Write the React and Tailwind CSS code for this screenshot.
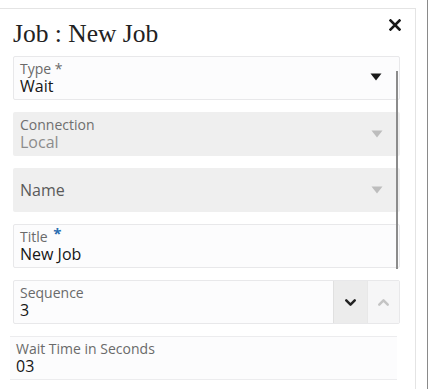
import { FiChevronDown, FiChevronUp } from 'react-icons/fi';

const sans = { fontFamily: '"Open Sans", "Noto Sans", sans-serif' };

function Caret({ light }) {
  return (
    <svg width="12" height="8" viewBox="0 0 12 8" className="shrink-0">
      <path d="M0.5 0.5 L11.5 0.5 L6 7.5 Z" fill={light ? '#bdbdbd' : '#1a1a1a'} />
    </svg>
  );
}

export default function App() {
  return (
    <div className="relative w-[428px] h-[389px] bg-white overflow-hidden border-r border-[#8a8a8a]">
      <div className="mt-[8px] w-[416px] h-[381px] border-t border-r border-[#e4e4e4] relative" style={sans}>
        {/* Header */}
        <div className="flex items-center justify-between h-[47px] pl-[13px] pr-[14px] pt-[3px]">
          <h1 className="text-[25.5px] leading-none text-[#222]" style={{ fontFamily: '"Liberation Serif", serif' }}>
            Job : New Job
          </h1>
          <svg width="12" height="12" viewBox="0 0 12 12" className="-mt-[18px]">
            <path d="M1.5 1.5 L10.5 10.5 M10.5 1.5 L1.5 10.5" stroke="#1a1a1a" strokeWidth="2.6" strokeLinecap="square" />
          </svg>
        </div>

        <div className="flex flex-col gap-[12px] pl-[13px] w-[400px]">
          {/* Type */}
          <div className="h-[44px] bg-[#fcfcfd] border border-[#e8e8ea] rounded-[2px] flex items-center pl-[6px] pr-[17px]">
            <div className="flex-1 flex flex-col">
              <span className="text-[14px] leading-[16px] text-[#6a6a6a]">Type *</span>
              <span className="text-[16px] leading-[19px] text-[#161616]">Wait</span>
            </div>
            <div className="mb-[2px]"><Caret /></div>
          </div>

          {/* Connection */}
          <div className="h-[44px] bg-[#efefef] rounded-[2px] flex items-center pl-[7px] pr-[17px]">
            <div className="flex-1 flex flex-col">
              <span className="text-[14px] leading-[16px] text-[#6e6e6e]">Connection</span>
              <span className="text-[16px] leading-[19px] text-[#8c8c8c]">Local</span>
            </div>
            <Caret light />
          </div>

          {/* Name */}
          <div className="h-[44px] bg-[#efefef] rounded-[2px] flex items-center pl-[7px] pr-[17px]">
            <span className="flex-1 text-[16px] text-[#5a5a5a]">Name</span>
            <Caret light />
          </div>

          {/* Title */}
          <div className="h-[44px] bg-[#fcfcfd] border border-[#e8e8ea] rounded-[2px] flex flex-col justify-center pl-[6px]">
            <span className="text-[14px] leading-[16px] text-[#6a6a6a]">
              Title <span className="text-[#2a6db0] text-[15px] font-bold relative -top-[3px] ml-[2px] leading-none">*</span>
            </span>
            <span className="text-[16px] leading-[19px] text-[#161616]">New Job</span>
          </div>

          {/* Sequence */}
          <div className="h-[44px] bg-[#fcfcfd] border border-[#e8e8ea] rounded-[2px] flex">
            <div className="flex-1 flex flex-col justify-center pl-[6px]">
              <span className="text-[14px] leading-[16px] text-[#6a6a6a]">Sequence</span>
              <span className="text-[16px] leading-[19px] text-[#161616]">3</span>
            </div>
            <div className="w-[34px] bg-[#ececec] border-l border-[#e0e0e0] flex items-center justify-center">
              <FiChevronDown size={17} strokeWidth={3.5} color="#222" />
            </div>
            <div className="w-[32px] bg-[#f6f6f7] border-l border-[#e8e8e8] flex items-center justify-center">
              <FiChevronUp size={17} strokeWidth={3.5} color="#c4c4c4" />
            </div>
          </div>

          {/* Wait Time */}
          <div className="h-[44px] -ml-[3px] w-[387px] bg-[#fcfcfd] border-t border-b border-[#ececee] flex flex-col justify-center pl-[6px]">
            <span className="text-[14px] leading-[16px] text-[#6a6a6a]">Wait Time in Seconds</span>
            <span className="text-[16px] leading-[19px] text-[#161616]">03</span>
          </div>
        </div>

        {/* scrollbar */}
        <div className="absolute left-[396px] top-[62px] w-[2px] h-[198px] bg-[#8c8c8c]" />
      </div>
    </div>
  );
}
